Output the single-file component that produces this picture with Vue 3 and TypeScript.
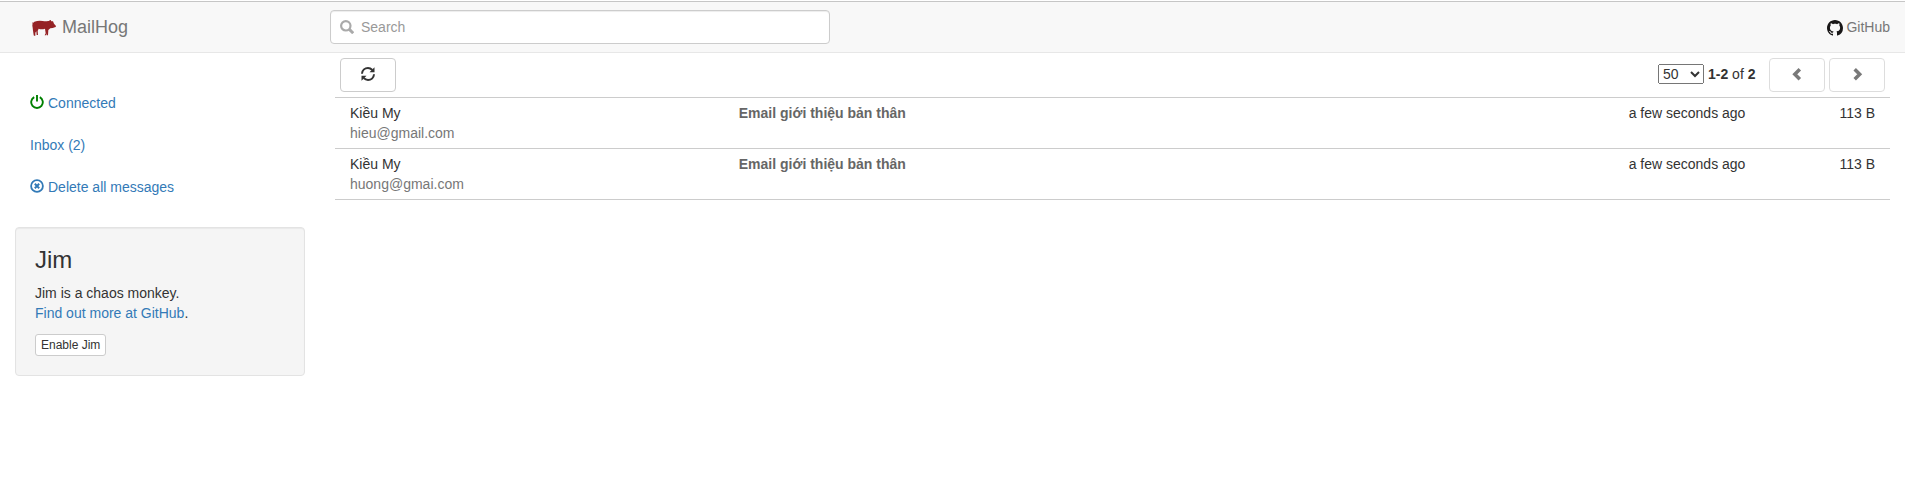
<script setup lang="ts">
import { ref } from 'vue'

interface Message {
  id: number
  name: string
  email: string
  subject: string
  time: string
  size: string
}

const messages: Message[] = [
  { id: 1, name: 'Kiều My', email: 'hieu@gmail.com', subject: 'Email giới thiệu bản thân', time: 'a few seconds ago', size: '113 B' },
  { id: 2, name: 'Kiều My', email: 'huong@gmai.com', subject: 'Email giới thiệu bản thân', time: 'a few seconds ago', size: '113 B' },
]
const pageSizes = [25, 50, 100, 250]
const pageSize = ref(50)
const query = ref('')
</script>

<template>
  <div class="page">
    <header class="navbar">
      <a class="brand">
        <svg class="pig" viewBox="36 30 72 48">
          <path d="M36 36L39 39L43 35Q55 31 68 33Q78 35 84 33L87 33L91 29L94 34L99 34L102 41L108 48L107 51L98 54L91 55L85 60L84 76L81 76L80 70L79 76L74 76L77 70L75 56Q64 59 56 56L53 63L54 75L50 75L49 64L46 68L46 77L42 77L41 75L39 62L38 53Q36 44 38 42Z" />
        </svg>
        <span>MailHog</span>
      </a>
      <div class="search">
        <svg class="icon" viewBox="0 0 14 14">
          <circle cx="5.8" cy="5.8" r="4.7" fill="none" stroke="currentColor" stroke-width="2.2" />
          <path d="M9.1 9.1L13.2 13.2" fill="none" stroke="currentColor" stroke-width="2.9" />
        </svg>
        <input v-model="query" type="text" placeholder="Search" />
      </div>
      <a class="github">
        <svg viewBox="0 0 16 16">
          <path d="M8 0C3.58 0 0 3.58 0 8c0 3.54 2.29 6.53 5.47 7.59.4.07.55-.17.55-.38 0-.19-.01-.82-.01-1.49-2.01.37-2.53-.49-2.69-.94-.09-.23-.48-.94-.82-1.13-.28-.15-.68-.52-.01-.53.63-.01 1.08.58 1.23.82.72 1.21 1.87.87 2.33.66.07-.52.28-.87.51-1.07-1.78-.2-3.64-.89-3.64-3.95 0-.87.31-1.59.82-2.15-.08-.2-.36-1.02.08-2.12 0 0 .67-.21 2.2.82.64-.18 1.32-.27 2-.27s1.36.09 2 .27c1.53-1.04 2.2-.82 2.2-.82.44 1.1.16 1.92.08 2.12.51.56.82 1.27.82 2.15 0 3.07-1.87 3.75-3.65 3.95.29.25.54.73.54 1.48 0 1.07-.01 1.93-.01 2.2 0 .21.15.46.55.38A8.01 8.01 0 0 0 16 8c0-4.42-3.58-8-8-8z" />
        </svg>
        <span>GitHub</span>
      </a>
    </header>

    <div class="body">
      <aside class="sidebar">
        <ul class="nav">
          <li>
            <svg class="icon power" viewBox="0 0 14 14" fill="none" stroke="currentColor" stroke-width="1.9">
              <path d="M4.2 2.1A5.8 5.8 0 1 0 9.8 2.1M7 0V6.5" />
            </svg>
            <span>Connected</span>
          </li>
          <li><span>Inbox (2)</span></li>
          <li>
            <svg class="icon" viewBox="0 0 14 14" fill="none" stroke="currentColor">
              <circle cx="7" cy="7" r="5.9" stroke-width="1.8" />
              <path d="M4.8 4.8L9.2 9.2M9.2 4.8L4.8 9.2" stroke-width="2" />
            </svg>
            <span>Delete all messages</span>
          </li>
        </ul>
        <section class="well">
          <h3>Jim</h3>
          <p>Jim is a chaos monkey.<br /><a>Find out more at GitHub</a>.</p>
          <button class="btn-xs">Enable Jim</button>
        </section>
      </aside>

      <main class="content">
        <div class="toolbar">
          <button class="btn">
            <svg class="icon" viewBox="0 0 14 14">
              <path d="M1 6.8C1.2 3.2 4 1.1 7 1.1C8.7 1.1 10.1 1.8 11.4 3M13 7.2C12.8 10.8 10 12.9 7 12.9C5.3 12.9 3.9 12.2 2.6 11" fill="none" stroke="currentColor" stroke-width="2" />
              <path d="M13.5.3V5.3H8.5ZM.5 13.7V8.7H5.5Z" fill="currentColor" />
            </svg>
          </button>
          <div class="pager">
            <select v-model="pageSize">
              <option v-for="n in pageSizes" :key="n" :value="n">{{ n }}</option>
            </select>
            <span class="range"><b>1-2</b> of <b>2</b></span>
            <button class="btn" disabled>
              <svg class="icon" viewBox="0 0 14 14"><path d="M9.8 2.2L4.8 7.2L9.8 12.2" fill="none" stroke="currentColor" stroke-width="3.5" /></svg>
            </button>
            <button class="btn" disabled>
              <svg class="icon" viewBox="0 0 14 14"><path d="M4.7 2.2L9.7 7.2L4.7 12.2" fill="none" stroke="currentColor" stroke-width="3.5" /></svg>
            </button>
          </div>
        </div>
        <div class="messages">
          <div v-for="m in messages" :key="m.id" class="row">
            <div>{{ m.name }}<div class="email">{{ m.email }}</div></div>
            <div class="subject">{{ m.subject }}</div>
            <div class="right">{{ m.time }}</div>
            <div class="right">{{ m.size }}</div>
          </div>
        </div>
      </main>
    </div>
  </div>
</template>

<style>
body {
  margin: 0;
  background: #fff;
}
</style>

<style scoped>
* {
  box-sizing: border-box;
}
.page {
  padding-top: 1px;
  min-height: 492px;
  font: 14px/20px "Liberation Sans", Arial, sans-serif;
  color: #333;
}
.icon {
  display: block;
  flex: none;
  width: 14px;
  height: 14px;
}
.navbar {
  display: grid;
  grid-template-columns: 330px 500px 1fr;
  height: 52px;
  padding-right: 15px;
  background: #f8f8f8;
  border-top: 1px solid #c6c6c6;
  border-bottom: 1px solid #e7e7e7;
}
.brand {
  display: flex;
  align-items: center;
  padding-left: 32px;
  gap: 6px;
  height: 50px;
  font-size: 18px;
  color: #777;
}
.pig {
  width: 24px;
  height: 16px;
  margin-top: 2px;
  fill: #952225;
}
.search {
  display: flex;
  align-items: center;
  height: 34px;
  margin-top: 8px;
  padding: 0 9px;
  gap: 7px;
  color: #aaa;
  background: #fff;
  border: 1px solid #ccc;
  border-radius: 4px;
  box-shadow: inset 0 1px 1px rgba(0, 0, 0, 0.075);
}
.search input {
  flex: 1;
  min-width: 0;
  padding: 0;
  border: 0;
  outline: 0;
  background: transparent;
  font: inherit;
  color: #555;
}
.search input::placeholder {
  color: #999;
}
.github {
  display: flex;
  align-items: center;
  justify-content: flex-end;
  gap: 3px;
  height: 50px;
  color: #777;
}
.github svg {
  width: 16px;
  height: 16px;
  margin-top: 2px;
  fill: #191717;
}
.body {
  display: grid;
  grid-template-columns: 290px 1555px;
  gap: 30px;
  padding: 0 15px;
}
.sidebar {
  padding-top: 30px;
}
.nav {
  display: flex;
  flex-direction: column;
  gap: 2px;
  margin: 0 0 20px;
  padding: 0;
  list-style: none;
}
.nav li {
  display: flex;
  align-items: center;
  gap: 4px;
  height: 40px;
  padding: 0 15px;
  color: #337ab7;
}
.nav .icon {
  margin-top: -2px;
}
.nav .power {
  color: #008000;
}
.well {
  height: 149px;
  padding: 19px;
  background: #f5f5f5;
  border: 1px solid #e3e3e3;
  border-radius: 4px;
  box-shadow: inset 0 1px 1px rgba(0, 0, 0, 0.05);
}
.well h3 {
  margin: 0 0 10px;
  font-size: 24px;
  font-weight: 400;
  line-height: 26.4px;
}
.well p {
  margin: 0 0 10px;
}
.well a {
  color: #337ab7;
}
.btn-xs {
  display: block;
  height: 22px;
  margin-top: 11px;
  padding: 1px 5px;
  font: 12px/18px "Liberation Sans", Arial, sans-serif;
  color: #333;
  background: #fff;
  border: 1px solid #ccc;
  border-radius: 3px;
}
.toolbar {
  display: flex;
  justify-content: space-between;
  align-items: center;
  height: 44px;
  padding: 0 5px;
}
.btn {
  display: flex;
  align-items: center;
  justify-content: center;
  width: 56px;
  height: 34px;
  padding: 0 0 2px;
  color: #333;
  background: #fff;
  border: 1px solid #ccc;
  border-radius: 4px;
}
.btn:disabled {
  opacity: 0.65;
}
.pager {
  display: flex;
  align-items: center;
  gap: 4px;
}
.pager select {
  width: 46px;
  height: 20px;
  margin-top: -2px;
  font: inherit;
  color: inherit;
}
.range {
  margin: -2px 9.5px 0 0;
}
.messages {
  border-top: 1px solid #ccc;
}
.row {
  display: grid;
  grid-template-columns: 3fr 6fr 2fr 1fr;
  height: 51px;
  padding: 5px 0;
  border-bottom: 1px solid #ccc;
}
.row > div {
  padding: 0 15px;
}
.email {
  color: #777;
}
.subject {
  font-weight: bold;
  color: #666;
}
.right {
  text-align: right;
}
</style>
